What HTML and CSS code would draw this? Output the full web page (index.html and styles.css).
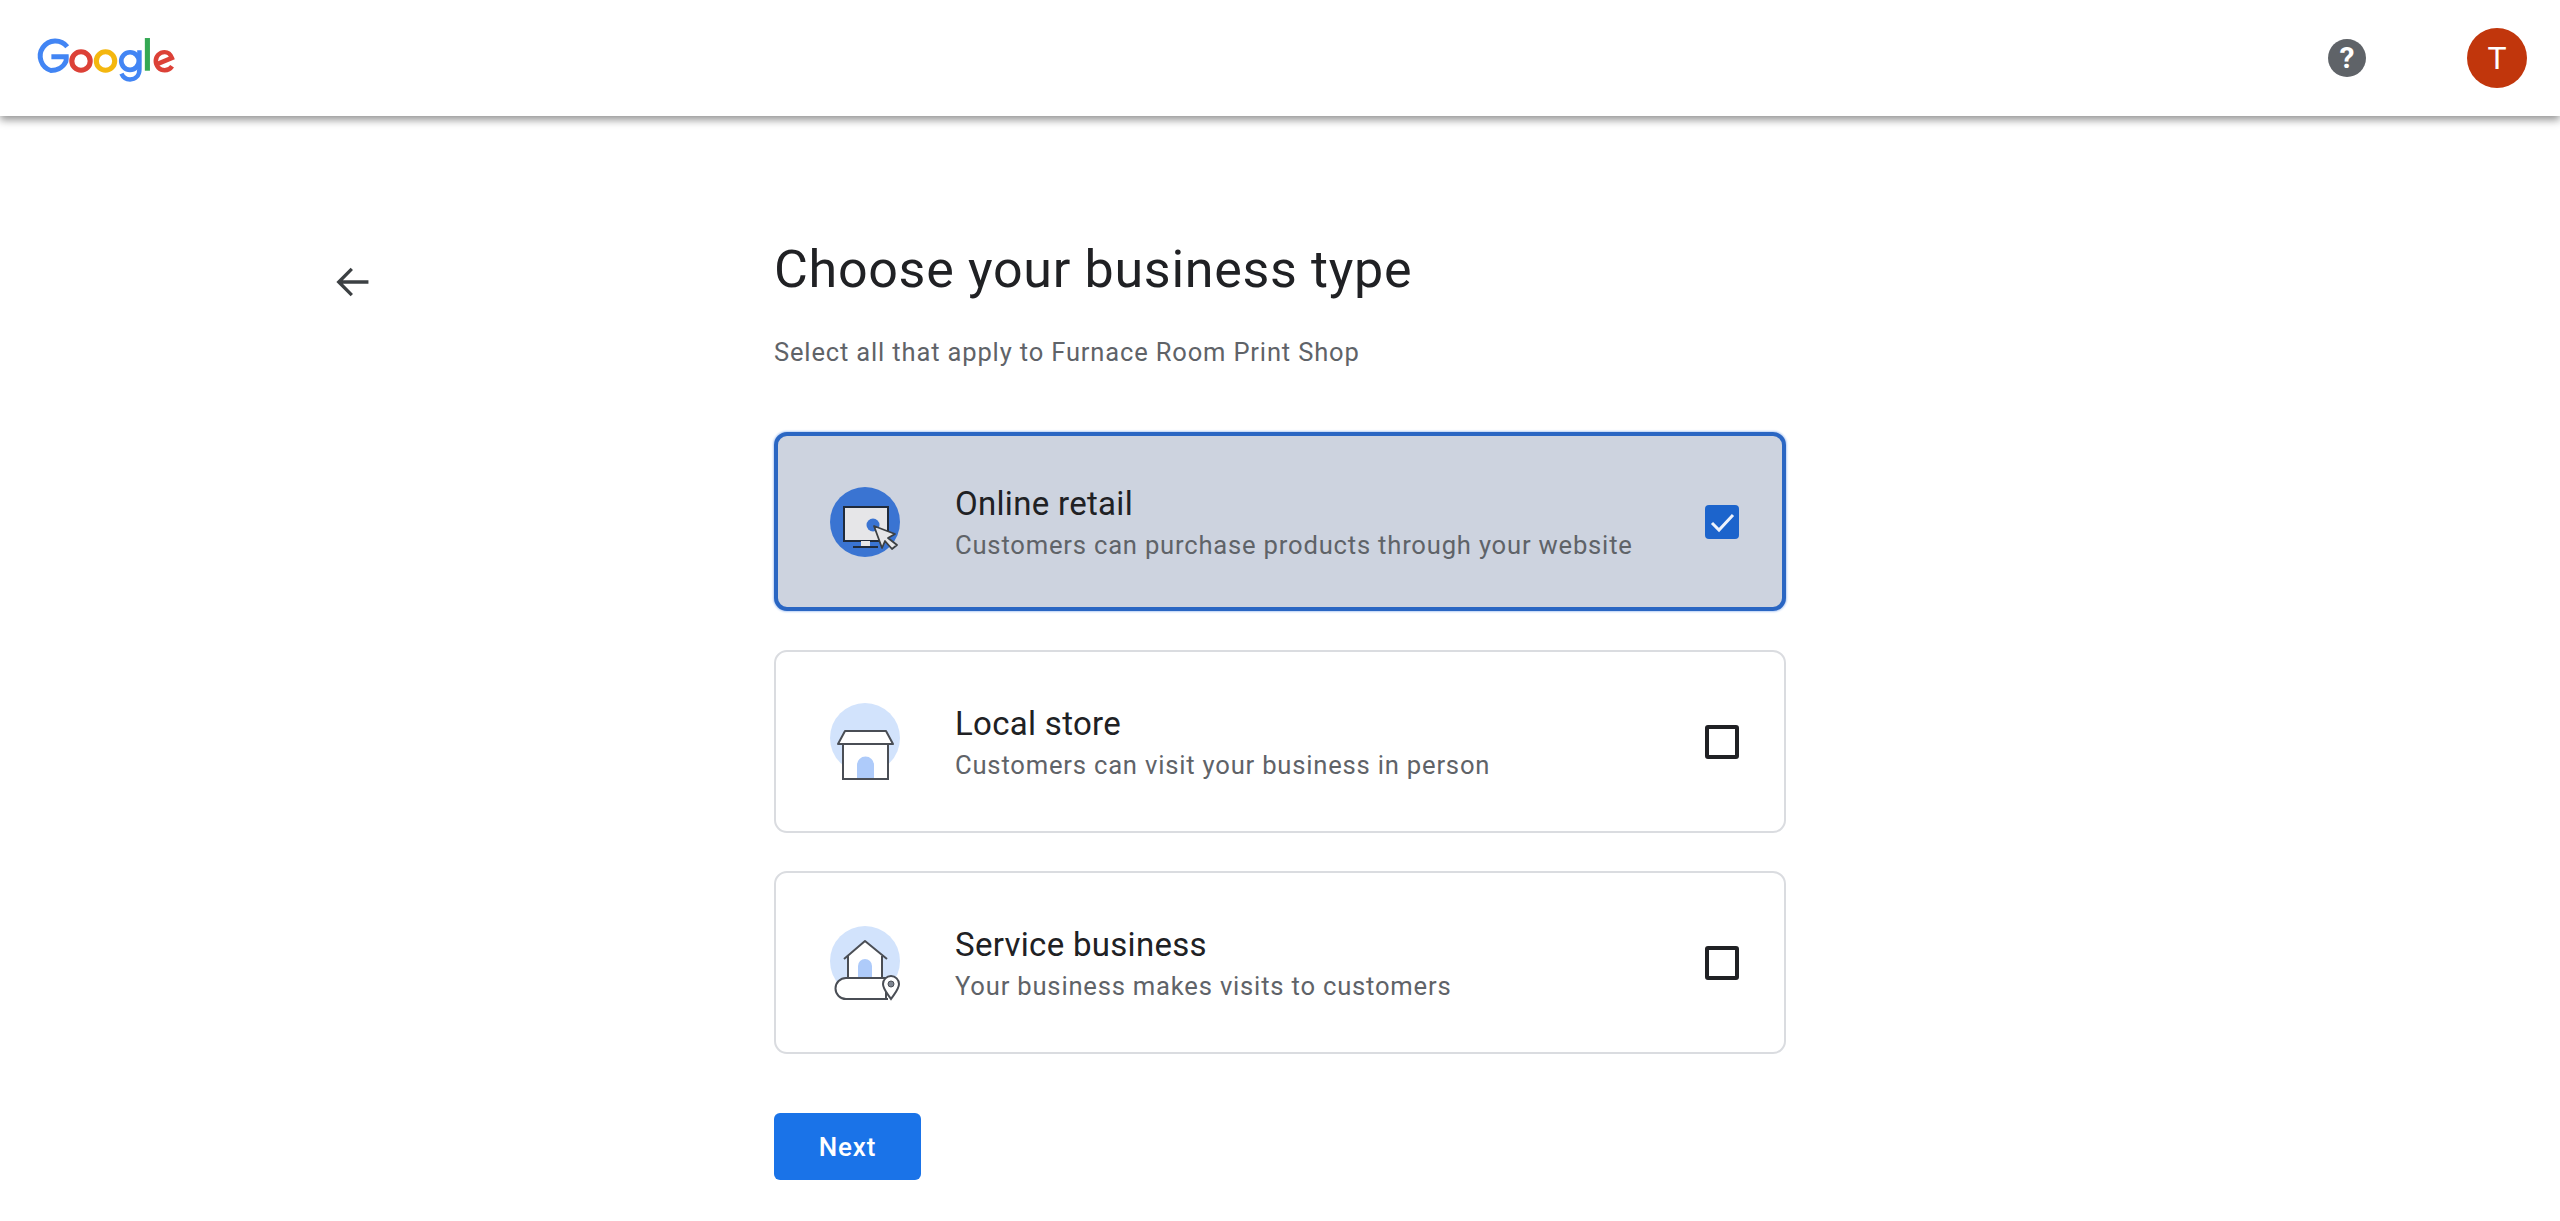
FILE: index.html
```html
<!DOCTYPE html>
<html lang="en">
<head>
<meta charset="utf-8">
<title>Choose your business type</title>
<link rel="stylesheet" href="styles.css">
</head>
<body>
<header class="topbar">
  <svg class="logo" viewBox="0 0 140 46" role="img" aria-label="Google">
    <path d="M33.5 9.5 A14.8 14.8 0 1 0 17.5 32.8 C22 32.8 29 31 32.2 24 C32.5 22.5 32.7 21 32.6 19.3 H18" fill="none" stroke="#4285f4" stroke-width="4.8"/>
    <circle cx="47" cy="23.5" r="9" fill="none" stroke="#dc4137" stroke-width="5"/>
    <circle cx="71" cy="23.5" r="9" fill="none" stroke="#f4b70f" stroke-width="5"/>
    <circle cx="95" cy="23.5" r="8.6" fill="none" stroke="#4285f4" stroke-width="4.6"/>
    <path d="M104.2 13 V31.5 C104.2 38 100 41.5 95 41.5 C91 41.5 88 39 86.6 35.8" fill="none" stroke="#4285f4" stroke-width="4.4"/>
    <path d="M112 1 V33" fill="none" stroke="#34a853" stroke-width="5"/>
    <path d="M121.5 26.5 L136 20.5 C134.5 16.5 131.8 14.8 128.8 14.8 C123.8 14.8 120.2 18.8 120.2 23.6 C120.2 28.6 124 32.5 129 32.5 C132.2 32.5 134.6 31 136.2 28.6" fill="none" stroke="#dc4137" stroke-width="4.4"/>
  </svg>
  <div class="topbar-actions">
    <span class="help">?</span>
    <span class="avatar">T</span>
  </div>
</header>
<main class="page">
  <button class="back" aria-label="Back">
    <svg viewBox="0 0 32 32" class="back-icon"><path d="M29 16 H4 M15 5 L4 16 L15 27" fill="none" stroke="#3c4043" stroke-width="2.8"/></svg>
  </button>
  <section class="content">
    <h1 class="title">Choose your business type</h1>
    <p class="subtitle">Select all that apply to Furnace Room Print Shop</p>
    <div class="options">
      <div class="card card-selected">
        <svg class="card-icon" viewBox="0 0 70 80">
          <circle cx="35" cy="35" r="35" fill="#3a74d2"/>
          <rect x="14" y="20" width="44" height="34" fill="#e6e6e8" stroke="#202b3c" stroke-width="2"/>
          <rect x="31" y="54" width="9" height="5" fill="#e6e6e8"/>
          <path d="M23 60 H48" stroke="#202b3c" stroke-width="2"/>
          <circle cx="43" cy="38" r="6.5" fill="#3a74d2"/>
          <path d="M44 39 L65 47 L58 51 L67 58 L62 62 L55 54 L52 61 Z" fill="#e6e6e8" stroke="#3c4043" stroke-width="1.8" stroke-linejoin="round"/>
        </svg>
        <div class="card-text">
          <div class="card-title">Online retail</div>
          <div class="card-desc">Customers can purchase products through your website</div>
        </div>
        <span class="check check-on">
          <svg viewBox="0 0 34 34" class="check-mark"><path d="M7 18 L14 25 L28 10" fill="none" stroke="#eef3fc" stroke-width="3"/></svg>
        </span>
      </div>
      <div class="card">
        <svg class="card-icon card-icon-store" viewBox="0 0 70 80">
          <circle cx="35" cy="35" r="35" fill="#d2e3fc"/>
          <path d="M13 41 H58 V76 H13 Z" fill="#fff" stroke="#4a4e55" stroke-width="2"/>
          <path d="M8 41 L15 28 H56 L63 41 Z" fill="#fff" stroke="#4a4e55" stroke-width="2" stroke-linejoin="round"/>
          <path d="M27 75 V62 A8.5 8.5 0 0 1 44 62 V75 Z" fill="#aecbfa"/>
        </svg>
        <div class="card-text">
          <div class="card-title">Local store</div>
          <div class="card-desc">Customers can visit your business in person</div>
        </div>
        <span class="check"></span>
      </div>
      <div class="card">
        <svg class="card-icon card-icon-service" viewBox="0 0 70 80">
          <circle cx="35" cy="35" r="35" fill="#d2e3fc"/>
          <path d="M18 28 L35 15 L52 28 V52 H18 Z" fill="#fff"/>
          <path d="M14 33 L35 15 L57 33 M18 30 V52 M52 30 V52" fill="none" stroke="#4a4e55" stroke-width="2" stroke-linejoin="round"/>
          <path d="M28 52 V40 A7 7 0 0 1 42 40 V52 Z" fill="#aecbfa"/>
          <path d="M58 73 H16 A10.5 10.5 0 0 1 16 52 H56 V73" fill="#fff" stroke="#4a4e55" stroke-width="2"/>
          <path d="M61 73 C57 67 53 63 53 58 A8 8 0 0 1 69 58 C69 63 65 67 61 73 Z" fill="#fff" stroke="#4a4e55" stroke-width="2"/>
          <circle cx="61" cy="58" r="3" fill="#7d8490" stroke="#4a4e55"/>
        </svg>
        <div class="card-text">
          <div class="card-title">Service business</div>
          <div class="card-desc">Your business makes visits to customers</div>
        </div>
        <span class="check"></span>
      </div>
    </div>
    <button class="next">Next</button>
  </section>
</main>
</body>
</html>
```
FILE: styles.css
```css
* { box-sizing: border-box; }
html, body { margin: 0; padding: 0; }
body {
  background: #fff;
  color: #202124;
  font-family: Roboto, "Liberation Sans", sans-serif;
  height: 1221px;
  overflow: hidden;
}
.topbar {
  height: 116px;
  display: flex;
  align-items: center;
  justify-content: space-between;
  padding: 0 33px 0 33px;
  background: #fff;
  box-shadow: 0 4px 8px rgba(0, 0, 0, 0.42);
}
.logo { width: 143px; height: 47px; margin-top: 5px; display: block; }
.topbar-actions { display: flex; align-items: center; gap: 101px; }
.help {
  width: 38px;
  height: 38px;
  border-radius: 50%;
  background: #5f6368;
  color: #fff;
  font-size: 30px;
  font-weight: 700;
  line-height: 38px;
  text-align: center;
}
.avatar {
  width: 60px;
  height: 60px;
  border-radius: 50%;
  background: #c1360c;
  color: #fff;
  font-size: 32px;
  line-height: 60px;
  text-align: center;
}
.page {
  display: flex;
  align-items: flex-start;
  padding: 147px 0 0 334px;
}
.back {
  width: 38px;
  height: 38px;
  padding: 0;
  margin: 0 402px 0 0;
  border: 0;
  background: none;
  flex: none;
}
.back-icon { width: 38px; height: 38px; display: block; }
.content { width: 1012px; margin-top: -27px; }
.title {
  margin: 0;
  font-size: 52px;
  line-height: 68px;
  font-weight: 400;
  letter-spacing: 0.7px;
  color: #202124;
}
.subtitle {
  margin: 32px 0 0;
  font-size: 25.5px;
  line-height: 32px;
  letter-spacing: 0.85px;
  color: #5f6368;
}
.options { display: flex; flex-direction: column; gap: 38px; margin-top: 64px; }
.card {
  height: 183px;
  display: flex;
  align-items: center;
  padding: 0 45px 0 54px;
  border: 2px solid #dadce0;
  border-radius: 13px;
  background: #fff;
}
.card-selected {
  height: 179px;
  margin-bottom: 1px;
  background: #cdd3df;
  border: 4px solid #2a66c3;
  box-shadow: 0 0 2px 1px #b9d0f5;
  padding: 0 43px 0 52px;
}
.card-icon { width: 70px; height: 80px; flex: none; margin-top: 10px; overflow: visible; }
.card-icon-store { margin-top: 3px; }
.card-icon-service { margin-top: 7px; }
.card-text { flex: 1; margin: 4px 0 0 55px; }
.card-title { font-size: 33px; line-height: 42px; letter-spacing: 0.3px; color: #202124; }
.card-desc { font-size: 25.6px; line-height: 38px; letter-spacing: 0.8px; color: #5f6368; margin-top: 1px; }
.check {
  width: 34px;
  height: 34px;
  flex: none;
  border: 4px solid #202124;
  border-radius: 3px;
}
.check-on { background: #1c64cc; border: 0; border-radius: 4px; }
.check-mark { width: 34px; height: 34px; display: block; }
.next {
  display: block;
  width: 147px;
  height: 67px;
  margin-top: 59px;
  border: 0;
  border-radius: 6px;
  background: #1a73e8;
  color: #fff;
  font-family: Roboto, "Liberation Sans", sans-serif;
  font-size: 26px;
  font-weight: 500;
  letter-spacing: 0.8px;
}
```
